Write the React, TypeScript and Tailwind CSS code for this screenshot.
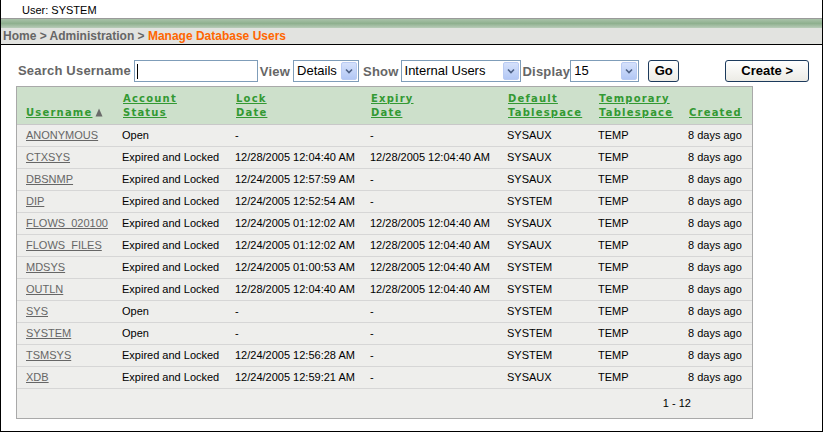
import React from 'react'

const rows = [
  ['ANONYMOUS', 'Open', '-', '-', 'SYSAUX', 'TEMP', '8 days ago'],
  ['CTXSYS', 'Expired and Locked', '12/28/2005 12:04:40 AM', '12/28/2005 12:04:40 AM', 'SYSAUX', 'TEMP', '8 days ago'],
  ['DBSNMP', 'Expired and Locked', '12/24/2005 12:57:59 AM', '-', 'SYSAUX', 'TEMP', '8 days ago'],
  ['DIP', 'Expired and Locked', '12/24/2005 12:52:54 AM', '-', 'SYSTEM', 'TEMP', '8 days ago'],
  ['FLOWS_020100', 'Expired and Locked', '12/24/2005 01:12:02 AM', '12/28/2005 12:04:40 AM', 'SYSAUX', 'TEMP', '8 days ago'],
  ['FLOWS_FILES', 'Expired and Locked', '12/24/2005 01:12:02 AM', '12/28/2005 12:04:40 AM', 'SYSAUX', 'TEMP', '8 days ago'],
  ['MDSYS', 'Expired and Locked', '12/24/2005 01:00:53 AM', '12/28/2005 12:04:40 AM', 'SYSTEM', 'TEMP', '8 days ago'],
  ['OUTLN', 'Expired and Locked', '12/28/2005 12:04:40 AM', '12/28/2005 12:04:40 AM', 'SYSTEM', 'TEMP', '8 days ago'],
  ['SYS', 'Open', '-', '-', 'SYSTEM', 'TEMP', '8 days ago'],
  ['SYSTEM', 'Open', '-', '-', 'SYSTEM', 'TEMP', '8 days ago'],
  ['TSMSYS', 'Expired and Locked', '12/24/2005 12:56:28 AM', '-', 'SYSTEM', 'TEMP', '8 days ago'],
  ['XDB', 'Expired and Locked', '12/24/2005 12:59:21 AM', '-', 'SYSAUX', 'TEMP', '8 days ago'],
]

// XP style dropdown
const Select = ({ value, width }: { value: string; width: string }) => (
  <div className={`${width} h-[22px] flex items-center border border-[#7f9db9] bg-white`}>
    <span className="flex-1 pl-[3px] text-[13px] text-black truncate">{value}</span>
    <div className="w-[16px] h-[18px] mr-[1px] flex items-center justify-center rounded-[2px] bg-gradient-to-b from-[#d5e1fb] to-[#b3c8f5] border border-[#b9cbf3]">
      <svg width="8" height="6" viewBox="0 0 8 6">
        <path d="M1 1.5 L4 4.5 L7 1.5" fill="none" stroke="#4d6185" strokeWidth="1.6" />
      </svg>
    </div>
  </div>
)

const Label = ({ children }: { children: React.ReactNode }) => (
  <span className="text-[13px] tracking-[0.2px] font-bold text-[#666666]">{children}</span>
)

const HeadCell = ({ top, bottom, extra }: { top?: string; bottom: string; extra?: React.ReactNode }) => (
  <th className="pl-[9px] pb-[4px] align-bottom text-left font-bold text-[10px] tracking-[1.2px] leading-[14px] text-[#339933] font-['DejaVu_Sans',sans-serif]">
    {top && <div className="underline">{top}</div>}
    <div className="flex items-center gap-[3px]">
      <span className="underline">{bottom}</span>
      {extra}
    </div>
  </th>
)

export default function App() {
  return (
    <div className="w-[824px] h-[433px] bg-white font-['Liberation_Sans',Arial,sans-serif] overflow-hidden">
      <div className="w-[823px] h-[432px] border-l border-r border-b border-black flex flex-col">
        {/* top bar */}
        <div className="h-[18px] pl-[21px] pt-[4px] text-[11px] leading-[12px] text-black">User: SYSTEM</div>
        <div className="h-[1px] bg-[#9a9a9a]" />
        <div className="h-[9px] bg-gradient-to-b from-[#a9c2a9] via-[#8fb08f] to-[#b9ccb9]" />
        <div className="h-[17px] bg-[#e2e3e0] border-b border-black pl-[2px] text-[12px] font-bold leading-[16px] text-[#666666]">
          Home &gt; Administration &gt; <span className="text-[#ff6600]">Manage Database Users</span>
        </div>

        {/* search row */}
        <div className="flex items-center mt-[15px] pl-[17px] h-[22px]">
          <Label>Search Username</Label>
          <div className="ml-[3px] w-[124px] h-[22px] border border-[#7f9db9] bg-white flex items-center pl-[2px]">
            <div className="w-[1px] h-[15px] bg-black" />
          </div>
          <span className="ml-[2px]"><Label>View</Label></span>
          <div className="ml-[3px]"><Select value="Details" width="w-[66px]" /></div>
          <span className="ml-[4px]"><Label>Show</Label></span>
          <div className="ml-[2px]"><Select value="Internal Users" width="w-[120px]" /></div>
          <span className="ml-[2px]"><Label>Display</Label></span>
          <div><Select value="15" width="w-[69px]" /></div>
          <button className="ml-[9px] w-[31px] h-[22px] rounded-[3px] border border-[#1c3a5c] bg-gradient-to-b from-white to-[#ecebe5] text-[13px] font-bold text-black">
            Go
          </button>
          <button className="ml-[46px] w-[84px] h-[22px] rounded-[3px] border border-[#1c3a5c] bg-gradient-to-b from-white to-[#ecebe5] text-[13px] font-bold text-black">
            Create &gt;
          </button>
        </div>

        {/* table */}
        <div className="ml-[15px] mt-[4px] w-[737px] border border-[#a9a9a9] bg-[#eeeeec]">
          <table className="w-full table-fixed border-collapse text-[11px] text-black">
            <colgroup>
              <col className="w-[97px]" />
              <col className="w-[113px]" />
              <col className="w-[135px]" />
              <col className="w-[137px]" />
              <col className="w-[91px]" />
              <col className="w-[90px]" />
              <col />
            </colgroup>
            <thead>
              <tr className="h-[37px] bg-[#cde0cb] border-b border-[#c8c8c8]">
                <HeadCell
                  bottom="Username"
                  extra={
                    <svg width="8" height="9" viewBox="0 0 8 9">
                      <path d="M4 0.5 L7.5 8.5 L0.5 8.5 Z" fill="#6b6b6b" />
                    </svg>
                  }
                />
                <HeadCell top="Account" bottom="Status" />
                <HeadCell top="Lock" bottom="Date" />
                <HeadCell top="Expiry" bottom="Date" />
                <HeadCell top="Default" bottom="Tablespace" />
                <HeadCell top="Temporary" bottom="Tablespace" />
                <HeadCell bottom="Created" />
              </tr>
            </thead>
            <tbody>
              {rows.map((r) => (
                <tr key={r[0]} className="h-[22px] border-b border-[#d6d6d6]">
                  <td className="pl-[9px] text-[#666666] underline">{r[0]}</td>
                  {r.slice(1).map((c, i) => (
                    <td key={i} className="pl-[8px] whitespace-nowrap">{c}</td>
                  ))}
                </tr>
              ))}
              <tr className="h-[30px]">
                <td colSpan={7} className="text-right pr-[61px]">1 - 12</td>
              </tr>
            </tbody>
          </table>
        </div>
      </div>
    </div>
  )
}
